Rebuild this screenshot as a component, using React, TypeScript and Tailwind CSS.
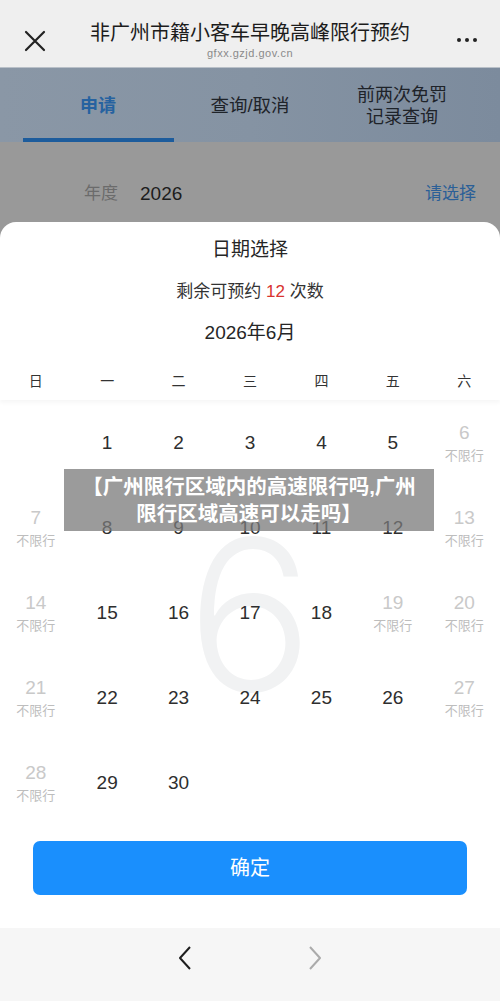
import React from 'react'

const FONT = '"Liberation Sans", "Noto Sans CJK SC", sans-serif'

const WEEKDAYS = ['日', '一', '二', '三', '四', '五', '六']

// June 2026 starts on a Monday; weekends and the 19th (holiday) carry no restriction
const FREE_DAYS = [6, 7, 13, 14, 19, 20, 21, 27, 28]

type Cell = { day: number | null; free: boolean }

function buildCells(): Cell[] {
  const cells: Cell[] = [{ day: null, free: false }]
  for (let d = 1; d <= 30; d++) cells.push({ day: d, free: FREE_DAYS.includes(d) })
  while (cells.length < 35) cells.push({ day: null, free: false })
  return cells
}

function Header() {
  return (
    <div className="relative h-[67px] bg-[#efefef] flex flex-col items-center">
      <svg className="absolute left-[24px] top-[30px]" width="22" height="22" viewBox="0 0 22 22">
        <path d="M2 2 L20 20 M20 2 L2 20" stroke="#222" strokeWidth="2.2" strokeLinecap="round" />
      </svg>
      <div className="mt-[21px] text-[20px] leading-[24px] text-[#1c1c1c]">
        非广州市籍小客车早晚高峰限行预约
      </div>
      <div className="mt-[2px] text-[11px] leading-[13px] text-[#8a8a8a] tracking-[0.5px]">
        gfxx.gzjd.gov.cn
      </div>
      <div className="absolute right-[23px] top-[38px] flex gap-[4px]">
        <span className="w-[4px] h-[4px] rounded-full bg-[#222]" />
        <span className="w-[4px] h-[4px] rounded-full bg-[#222]" />
        <span className="w-[4px] h-[4px] rounded-full bg-[#222]" />
      </div>
    </div>
  )
}

function Tabs() {
  return (
    <div className="h-[75px] bg-gradient-to-r from-[#8a97a6] via-[#8593a3] to-[#7c8b9d] border-t border-[#b9c0c8] grid grid-cols-3 px-[22px]">
      <div className="relative flex items-center justify-center">
        <span className="text-[18px] font-bold text-[#2662a0] pt-[2px]">申请</span>
        <div className="absolute left-[1px] right-0 bottom-0 h-[4px] bg-[#1d5c9c]" />
      </div>
      <div className="flex items-center justify-center">
        <span className="text-[18.5px] text-[#1e2329] pt-[2px]">查询/取消</span>
      </div>
      <div className="flex flex-col items-center justify-center text-[18px] leading-[22px] text-[#1e2329] pt-[2px]">
        <span>前两次免罚</span>
        <span>记录查询</span>
      </div>
    </div>
  )
}

function DayCell({ cell }: { cell: Cell }) {
  if (cell.day === null) return <div className="h-[85px]" />
  if (cell.free) {
    return (
      <div className="h-[85px] flex flex-col items-center justify-center">
        <span className="text-[19px] leading-[22px] text-[#c9c9c9]">{cell.day}</span>
        <span className="mt-[4px] text-[13px] leading-[16px] text-[#bdbdbd]">不限行</span>
      </div>
    )
  }
  return (
    <div className="h-[85px] flex items-center justify-center">
      <span className="text-[19px] leading-[22px] text-[#2e2e2e]">{cell.day}</span>
    </div>
  )
}

function DateSheet() {
  const cells = buildCells()
  return (
    <div className="relative bg-white rounded-t-[16px] flex flex-col">
      <div className="pt-[17px] text-center text-[19px] leading-[22px] text-[#262626]">日期选择</div>
      <div className="mt-[20px] text-center text-[17px] leading-[22px] text-[#333]">
        剩余可预约 <span className="text-[#d8332f]">12</span> 次数
      </div>
      <div className="mt-[19px] text-center text-[19px] leading-[22px] text-[#262626]">2026年6月</div>
      <div className="mt-[27px] pb-[9px] grid grid-cols-7 shadow-[0_3px_4px_rgba(0,0,0,0.035)] relative z-10">
        {WEEKDAYS.map((w) => (
          <div key={w} className="text-center text-[14px] leading-[20px] text-[#333]">
            {w}
          </div>
        ))}
      </div>

      <div className="relative">
        <div className="absolute inset-0 flex justify-center pointer-events-none">
          <span
            className="mt-[110px] text-[210px] leading-[210px] font-light text-[#f1f2f3]"
            style={{ fontFamily: 'Inter, "Liberation Sans", sans-serif' }}
          >
            6
          </span>
        </div>
        <div className="relative grid grid-cols-7">
          {cells.map((c, i) => (
            <DayCell key={i} cell={c} />
          ))}
        </div>
      </div>

      <div className="mt-[16px] mx-[33px] h-[54px] rounded-[7px] bg-[#1a8ffd] flex items-center justify-center">
        <span className="text-[20px] text-white">确定</span>
      </div>
      <div className="h-[33px]" />

      <div className="h-[73px] bg-[#f6f6f6] flex justify-center gap-[106px] pt-[18px]">
        <svg width="24" height="24" viewBox="0 0 24 24">
          <path d="M17 1 L7 12 L17 23" fill="none" stroke="#1e1e1e" strokeWidth="2" strokeLinejoin="round" />
        </svg>
        <svg width="24" height="24" viewBox="0 0 24 24">
          <path d="M7 1 L17 12 L7 23" fill="none" stroke="#ababab" strokeWidth="2" strokeLinejoin="round" />
        </svg>
      </div>
    </div>
  )
}

export default function App() {
  return (
    <div className="relative w-[500px] h-[1001px] overflow-hidden bg-[#999]" style={{ fontFamily: FONT }}>
      <Header />
      <Tabs />
      <div className="h-[80px] bg-[#999] flex items-start pt-[40px]">
        <span className="ml-[84px] text-[17px] leading-[24px] text-[#6b6b6b]">年度</span>
        <span className="ml-[22px] text-[19px] leading-[24px] text-[#1d1d1d]">2026</span>
        <span className="ml-auto mr-[24px] text-[17px] leading-[24px] text-[#2b5f97]">请选择</span>
      </div>
      <DateSheet />

      {/* caption banner laid over the calendar */}
      <div className="absolute left-[64px] top-[469px] w-[370px] h-[62px] bg-[#7a7a7a]/75 flex flex-col items-center justify-center">
        <span className="text-[20.5px] leading-[27px] font-bold text-white">【广州限行区域内的高速限行吗,广州</span>
        <span className="text-[20.5px] leading-[27px] font-bold text-white">限行区域高速可以走吗】</span>
      </div>
    </div>
  )
}
